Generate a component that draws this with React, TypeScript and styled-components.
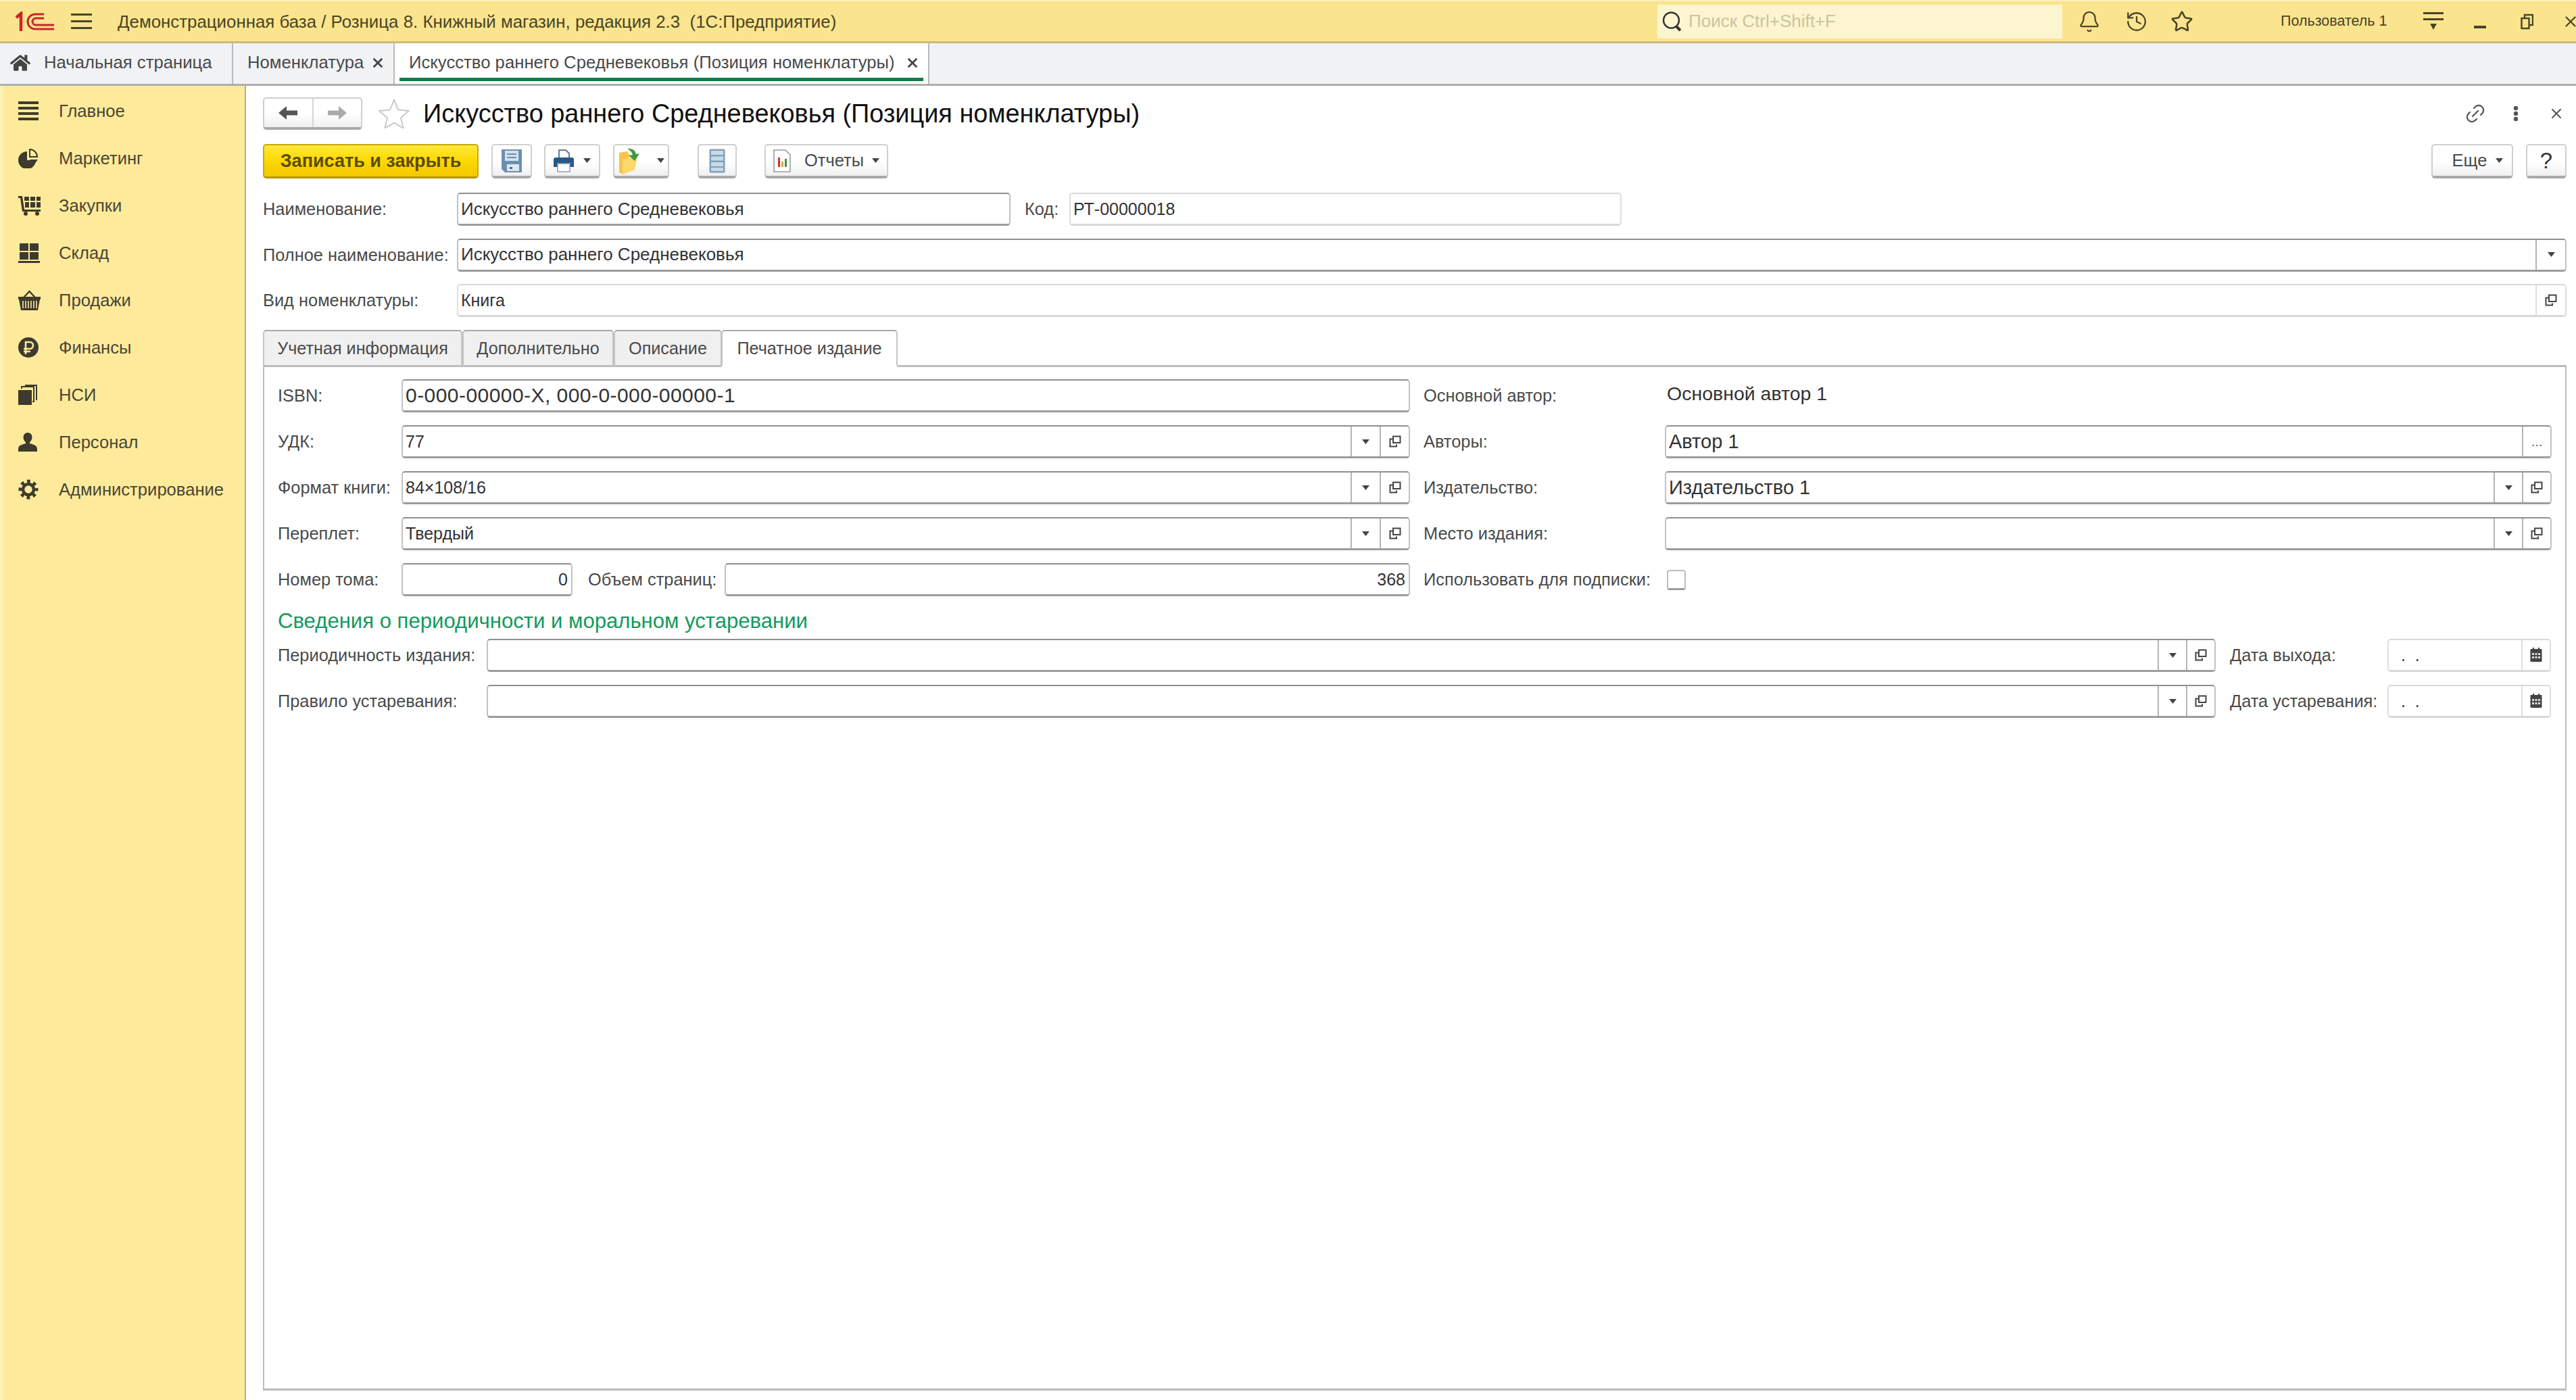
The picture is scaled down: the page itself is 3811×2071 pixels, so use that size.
import React from 'react';
import styled, { createGlobalStyle } from 'styled-components';
import { Bell, History, Star, Link2, X } from 'lucide-react';
import { FaHome } from 'react-icons/fa';

const GlobalStyle = createGlobalStyle`
  html, body {
    margin: 0;
    padding: 0;
    background: #fff;
  }
  body {
    font-family: "Liberation Sans", Arial, sans-serif;
    color: #333;
  }
`;

/* small drawings */

const Caret = () => (
  <svg width="11" height="7" viewBox="0 0 11 7"><path d="M0 0h11L5.5 7z" fill="#444" /></svg>
);

const OpenIcon = () => (
  <svg width="18" height="18" viewBox="0 0 18 18" fill="none" stroke="#444" strokeWidth="2">
    <rect x="6" y="1.5" width="10.5" height="9.5" />
    <path d="M6 5.5H1.5v11H11v-3" />
  </svg>
);

const CalendarIcon = () => (
  <svg width="18" height="22" viewBox="0 0 18 22">
    <path d="M4 0h2v3H4zM12 0h2v3h-2z" fill="#444" />
    <rect x="0.5" y="2" width="17" height="19" rx="1" fill="#444" />
    <path d="M3 8h3v3H3zM7.5 8h3v3h-3zM12 8h3v3h-3zM3 13h3v3H3zM7.5 13h3v3h-3zM12 13h3v3h-3z" fill="#ddd" />
  </svg>
);

const Logo1C = () => (
  <svg width="58" height="30" viewBox="0 0 58 30" fill="none" stroke="#c9252b">
    <path d="M2 9l7-6v26" strokeWidth="4.5" />
    <path d="M43 4H30a11 11 0 0 0 0 22h28" strokeWidth="3" />
    <path d="M43 10H31a5 5 0 0 0 0 10h27" strokeWidth="3" />
  </svg>
);

const BarsThin = () => (
  <svg width="31" height="23" viewBox="0 0 31 23" fill="#4a4426">
    <rect y="0" width="31" height="3" />
    <rect y="10" width="31" height="3" />
    <rect y="20" width="31" height="3" />
  </svg>
);

const SearchIcon = () => (
  <svg width="32" height="32" viewBox="0 0 32 32" fill="none" stroke="#333">
    <circle cx="14.5" cy="14" r="11.5" strokeWidth="2.4" />
    <path d="M22 23l6 6" strokeWidth="4" />
  </svg>
);

const MenuDownIcon = () => (
  <svg width="30" height="27" viewBox="0 0 30 27" fill="#4a4426">
    <rect y="0" width="30" height="3" />
    <rect y="9" width="30" height="3" />
    <path d="M10 17h10l-5 9z" />
  </svg>
);

const MinimizeIcon = () => (
  <svg width="18" height="24" viewBox="0 0 18 24"><rect y="18" width="18" height="4" fill="#4a4426" /></svg>
);

const RestoreIcon = () => (
  <svg width="19" height="24" viewBox="0 0 19 24" fill="none" stroke="#4a4426" strokeWidth="2.4">
    <rect x="6" y="2" width="12" height="15" />
    <rect x="1.5" y="7" width="11" height="15" fill="#fbe48e" />
  </svg>
);

const FavoriteStar = () => (
  <svg width="46" height="44" viewBox="0 0 46 44" fill="#fff" stroke="#c9c9c9" strokeWidth="2">
    <path d="M23 2l6.2 14.6 15.6 1.4-11.8 10.4 3.6 15.2L23 35.6 9.4 43.6 13 28.4 1.2 18l15.6-1.4z" />
  </svg>
);

const NavArrow = ({ back }: { back?: boolean }) => (
  <svg width="28" height="22" viewBox="0 0 28 22" fill="currentColor" style={{ transform: back ? undefined : 'scaleX(-1)' }}>
    <path d="M0 11L12 1v6.500h16v7H12V21z" />
  </svg>
);

const MoreDots = () => (
  <svg width="8" height="24" viewBox="0 0 8 24" fill="#555">
    <circle cx="4" cy="4" r="3.2" />
    <circle cx="4" cy="12" r="3.2" />
    <circle cx="4" cy="20" r="3.2" />
  </svg>
);

const FloppyIcon = () => (
  <svg width="30" height="34" viewBox="0 0 30 34">
    <path d="M0 0h30v34H5l-5-5z" fill="#6b8fb0" />
    <path d="M5 2h20v15H5z" fill="#d5e2ee" />
    <path d="M8 6h14v2H8zM8 11h14v2H8z" fill="#6b8fb0" />
    <path d="M8 22h18v10H8z" fill="#dfe7ee" />
    <path d="M12 26h4v3h-4z" fill="#456a8c" />
  </svg>
);

const PrinterIcon = () => (
  <svg width="30" height="34" viewBox="0 0 30 34">
    <path d="M8 1h10l5 5v9H8z" fill="#fff" stroke="#5d7f9f" strokeWidth="2" />
    <path d="M3 12h24a3 3 0 0 1 3 3v11h-6v-5H6v5H0V15a3 3 0 0 1 3-3z" fill="#28588a" />
    <path d="M6 21h18v12H6z" fill="#fff" stroke="#8d9fb0" strokeWidth="1.5" />
  </svg>
);

const FolderIcon = () => (
  <svg width="34" height="40" viewBox="0 0 34 40">
    <path d="M1 8l12-2 3 5v24l-9 5-6-3z" fill="#f6c548" />
    <path d="M6 18l22-4-4 19-18 7z" fill="#fbd96a" />
    <path d="M13 2c8-1 12 3 13 8l5-1-7 11-9-8 6-1c-1-4-4-7-8-9z" fill="#3c9b3a" />
  </svg>
);

const ListIcon = () => (
  <svg width="24" height="36" viewBox="0 0 24 36">
    <rect x="0.5" y="0.5" width="23" height="35" rx="2" fill="#7fa1bd" />
    <path d="M3 3h18v6H3zM3 11.500h18v6H3zM3 20h18v6H3zM3 28h18v5H3z" fill="#c9d9e6" />
  </svg>
);

const ReportIcon = () => (
  <svg width="26" height="34" viewBox="0 0 26 34">
    <path d="M1 1h17l7 7v25H1z" fill="#fff" stroke="#9a9a9a" strokeWidth="1.6" />
    <path d="M7 12h3v14H7z" fill="#c9352b" />
    <path d="M12 18h3v8h-3z" fill="#e0a82e" />
    <path d="M17 14h3v12h-3z" fill="#3c8f3f" />
  </svg>
);

const SideBars = () => (
  <svg width="30" height="30" viewBox="0 0 30 30" fill="#3e3a2e">
    <rect y="1" width="30" height="4" />
    <rect y="9" width="30" height="4" />
    <rect y="17" width="30" height="4" />
    <rect y="25" width="30" height="4" />
  </svg>
);

const SidePie = () => (
  <svg width="30" height="30" viewBox="0 0 30 30" fill="#3e3a2e">
    <path d="M13 5v13h13a13 13 0 1 1-13-13z" />
    <path d="M17 2a11 11 0 0 1 11 11H17z" fill="none" stroke="#3e3a2e" strokeWidth="2" />
    <path d="M17 17h12l-6 8z" />
  </svg>
);

const SideCart = () => (
  <svg width="33" height="30" viewBox="0 0 33 30" fill="#3e3a2e">
    <path d="M0 1h6l3 20h24v3H6L3 4H0z" />
    <path d="M9 2h7v6H9zM18 2h7v6h-7zM27 2h6v6h-6zM10 10h6v8h-6zM18 10h7v8h-7zM27 10h6v8h-6z" />
    <circle cx="11" cy="27" r="3" />
    <circle cx="28" cy="27" r="3" />
  </svg>
);

const SideStore = () => (
  <svg width="32" height="30" viewBox="0 0 32 30" fill="#3e3a2e">
    <path d="M2 1h13v11H2zM17 1h13v11H17zM2 14h13v11H2zM17 14h13v11H17z" />
    <rect y="27" width="32" height="3" />
  </svg>
);

const SideBasket = () => (
  <svg width="33" height="30" viewBox="0 0 33 30">
    <path d="M8 11L16.500 2 25 11" fill="none" stroke="#3e3a2e" strokeWidth="2.4" />
    <path d="M0 10h33v4h-1l-3 16H4L1 14H0z" fill="#3e3a2e" />
    <path d="M7 16v11M11 16v11M15 16v11M19 16v11M23 16v11M27 16v11" stroke="#fdeb9b" strokeWidth="1.6" />
  </svg>
);

const SideRuble = () => (
  <svg width="30" height="30" viewBox="0 0 30 30">
    <circle cx="15" cy="15" r="15" fill="#3e3a2e" />
    <path d="M11 25V7h6a5 5 0 0 1 0 10H8M8 21h10" fill="none" stroke="#fdeb9b" strokeWidth="2.6" />
  </svg>
);

const SideStack = () => (
  <svg width="28" height="30" viewBox="0 0 28 30" fill="none" stroke="#3e3a2e" strokeWidth="2">
    <rect x="0" y="8" width="20" height="22" fill="#3e3a2e" stroke="none" />
    <path d="M5 6V3h18v22h-2" />
    <path d="M10 1h17v22" />
  </svg>
);

const SidePerson = () => (
  <svg width="28" height="30" viewBox="0 0 28 30" fill="#3e3a2e">
    <path d="M14 1a6.500 6.500 0 0 1 6.500 7c0 3-2 6-3.500 7v2c3 1 11 2 11 8v4H0v-4c0-6 8-7 11-8v-2c-1.500-1-3.500-4-3.500-7A6.500 6.500 0 0 1 14 1z" />
  </svg>
);

const SideGear = () => (
  <svg width="30" height="30" viewBox="0 0 30 30" fill="none" stroke="#3e3a2e">
    <circle cx="15" cy="15" r="8" strokeWidth="4.500" />
    <circle cx="15" cy="15" r="12" strokeWidth="5" strokeDasharray="4.710 4.710" strokeDashoffset="2.350" />
  </svg>
);

/* shell */

const Page = styled.div`
  width: 100vw;
  height: 100vh;
  display: flex;
  flex-direction: column;
  overflow: hidden;
`;

const TopBar = styled.header`
  flex: none;
  height: 64px;
  box-sizing: border-box;
  display: flex;
  align-items: center;
  background: #fbe48e;
  border-top: 2px solid #fdf0b8;
  border-bottom: 3px solid #cdb97c;
`;

const LogoSlot = styled.div`
  flex: none;
  margin-left: 22px;
  display: flex;
`;

const MenuSlot = styled.div`
  flex: none;
  margin-left: 25px;
  display: flex;
`;

const AppTitle = styled.div`
  flex: none;
  margin-left: 38px;
  padding-top: 2px;
  width: 2278px;
  font-size: 25.85px;
  color: #4a4426;
  white-space: pre;
`;

const SearchBox = styled.div`
  flex: none;
  width: 599px;
  height: 50px;
  box-sizing: border-box;
  display: flex;
  align-items: center;
  gap: 8px;
  padding-left: 6px;
  background: #fdf5cf;
`;

const SearchHint = styled.span`
  font-size: 26px;
  color: #c9c4a4;
`;

const TopSlot = styled.div<{ $w: number; $ml?: number }>`
  flex: none;
  width: ${p => p.$w}px;
  margin-left: ${p => p.$ml || 0}px;
  display: flex;
  justify-content: center;
  color: #4a4426;
`;

const UserName = styled.div`
  flex: none;
  margin-left: 113px;
  width: 160px;
  font-size: 21.5px;
  color: #4a4426;
  white-space: nowrap;
`;

const TabBar = styled.nav`
  flex: none;
  height: 63px;
  box-sizing: border-box;
  display: flex;
  background: #f1f2f4;
  border-bottom: 3px solid #aeaeae;
`;

const PageTab = styled.div<{ $w: number; $active?: boolean }>`
  width: ${p => p.$w}px;
  box-sizing: border-box;
  position: relative;
  display: flex;
  align-items: center;
  padding: 0 12px 3px 21px;
  font-size: 25.7px;
  color: #4a4a4a;
  white-space: nowrap;
  background: ${p => (p.$active ? '#fff' : 'transparent')};
  border-right: 2px solid #b9b9b9;
  ${p => p.$active && `
    &::after {
      content: "";
      position: absolute;
      left: 7px;
      right: 7px;
      bottom: 4px;
      height: 5px;
      background: #0e7d4a;
    }
  `}
`;

const HomeGlyph = styled.span`
  display: flex;
  margin: 0 20px 0 -6px;
  font-size: 30px;
  color: #444;
`;

const TabClose = styled.span`
  display: flex;
  margin-left: auto;
  color: #444;
`;

const Body = styled.div`
  flex: 1;
  min-height: 0;
  display: flex;
`;

const Sidebar = styled.aside`
  flex: none;
  width: 364px;
  box-sizing: border-box;
  padding-top: 2px;
  background: #fdeb9b;
  border-left: 4px solid #fdf2b4;
  border-right: 2px solid #b8ae84;
`;

const SideItem = styled.div`
  height: 70px;
  display: flex;
  align-items: center;
  padding-left: 23px;
  font-size: 25.6px;
  color: #4b4535;
`;

const SideIcon = styled.span`
  width: 60px;
  flex: none;
  display: flex;
  font-size: 30px;
  color: #3e3a2e;
`;

const Main = styled.main`
  flex: 1;
  min-width: 0;
  display: flex;
  flex-direction: column;
  box-sizing: border-box;
  padding: 17px 14px 14px 25px;
`;

/* form header */

const HeaderRow = styled.div`
  flex: none;
  height: 48px;
  display: flex;
  align-items: center;
`;

const NavGroup = styled.div`
  width: 147px;
  height: 48px;
  box-sizing: border-box;
  display: flex;
  border: 2px solid #cfcfcf;
  border-bottom: 4px solid #a9a9a9;
  border-radius: 5px;
  background: linear-gradient(#fff 50%, #f0f0f0);
`;

const NavPart = styled.div<{ $dim?: boolean }>`
  flex: 1;
  display: flex;
  align-items: center;
  justify-content: center;
  color: ${p => (p.$dim ? '#a9a9a9' : '#555')};
  & + & {
    border-left: 2px solid #d5d5d5;
  }
`;

const StarSlot = styled.div`
  margin-left: 24px;
  display: flex;
`;

const FormTitle = styled.h1`
  margin: 0 0 0 20px;
  font-size: 37.9px;
  font-weight: 400;
  color: #111;
  white-space: nowrap;
`;

const HeaderActions = styled.div`
  margin-left: auto;
  margin-right: -15px;
  display: flex;
  align-items: center;
  color: #555;
`;

const ActionSlot = styled.div<{ $w: number }>`
  width: ${p => p.$w}px;
  display: flex;
  justify-content: center;
`;

const Toolbar = styled.div`
  flex: none;
  height: 51px;
  margin-top: 21px;
  display: flex;
`;

const ToolButton = styled.div<{ $w: number; $ml?: number; $gap?: number; $auto?: boolean; $fs?: number }>`
  width: ${p => p.$w}px;
  margin-left: ${p => (p.$auto ? 'auto' : `${p.$ml || 0}px`)};
  box-sizing: border-box;
  display: flex;
  align-items: center;
  justify-content: center;
  gap: ${p => p.$gap || 0}px;
  font-size: ${p => p.$fs || 25.5}px;
  color: #4a4a4a;
  border: 2px solid #cfcfcf;
  border-bottom: 4px solid #a9a9a9;
  border-radius: 5px;
  background: linear-gradient(#fff 55%, #efefef);
`;

const ToolLabel = styled.span<{ $ml?: number }>`
  margin-left: ${p => p.$ml || 0}px;
`;

const HelpMark = styled.span`
  font-size: 33px;
  color: #333;
`;

const SaveButton = styled.div`
  width: 319px;
  box-sizing: border-box;
  display: flex;
  align-items: center;
  justify-content: center;
  font-size: 27px;
  font-weight: 700;
  color: #5c4c00;
  border: 2px solid #c9a80c;
  border-bottom: 3px solid #b7960a;
  border-radius: 5px;
  background: linear-gradient(#ffe93a, #fcd800 50%, #f4c800);
`;

/* fields */

const FormRows = styled.div`
  flex: none;
  margin-top: 21px;
  display: flex;
  flex-direction: column;
  gap: 18.5px;
`;

const Row = styled.div`
  height: 49px;
  display: flex;
  align-items: center;
`;

const Label = styled.label<{ $w?: number; $ml?: number }>`
  flex: none;
  width: ${p => (p.$w ? `${p.$w}px` : 'auto')};
  margin-left: ${p => p.$ml || 0}px;
  font-size: 25.4px;
  color: #4a4a4a;
  white-space: nowrap;
`;

const FieldBox = styled.div<{ $w?: number; $light?: boolean }>`
  ${p => (p.$w ? `width: ${p.$w}px; flex: none;` : 'flex: 1; min-width: 0;')}
  height: 49px;
  box-sizing: border-box;
  display: flex;
  background: #fff;
  border-radius: 5px;
  border: 2px solid ${p => (p.$light ? '#dedede' : '#c2c2c2')};
  border-top-color: ${p => (p.$light ? '#d8d8d8' : '#8f8f8f')};
  border-bottom: 3px solid ${p => (p.$light ? '#d8d8d8' : '#9c9c9c')};
`;

const FieldText = styled.div<{ $right?: boolean; $size?: number; $track?: number }>`
  flex: 1;
  min-width: 0;
  display: flex;
  align-items: center;
  justify-content: ${p => (p.$right ? 'flex-end' : 'flex-start')};
  padding: 0 5px 0 4px;
  font-size: ${p => p.$size || 25}px;
  letter-spacing: ${p => p.$track || 0}px;
  color: #333;
  white-space: pre;
`;

const FieldButton = styled.div<{ $w?: number; $light?: boolean }>`
  flex: none;
  width: ${p => p.$w || 42}px;
  box-sizing: border-box;
  display: flex;
  align-items: center;
  justify-content: center;
  font-size: 20px;
  color: #666;
  border-left: 2px solid ${p => (p.$light ? '#dedede' : '#b5b5b5')};
`;

type FieldProps = {
  w?: number;
  light?: boolean;
  value?: string;
  right?: boolean;
  size?: number;
  track?: number;
  buttons?: React.ReactNode[];
  btnW?: number;
};

const Field = ({ w, light, value, right, size, track, buttons, btnW }: FieldProps) => (
  <FieldBox $w={w} $light={light}>
    <FieldText $right={right} $size={size} $track={track}>{value}</FieldText>
    {buttons?.map((b, i) => (
      <FieldButton key={i} $w={btnW} $light={light}>{b}</FieldButton>
    ))}
  </FieldBox>
);

const choice = [<Caret />, <OpenIcon />];

/* tabs and panel */

const FormTabs = styled.div`
  flex: none;
  margin-top: 19px;
  height: 55px;
  display: flex;
`;

const FormTab = styled.div<{ $w: number; $active?: boolean }>`
  width: ${p => p.$w}px;
  box-sizing: border-box;
  position: relative;
  z-index: ${p => (p.$active ? 1 : 0)};
  display: flex;
  align-items: center;
  justify-content: center;
  font-size: 25.2px;
  color: #4a4a4a;
  white-space: nowrap;
  background: ${p => (p.$active ? '#fff' : '#f0f0f0')};
  border: 2px solid #c4c4c4;
  border-top-color: #a9a9a9;
  border-bottom: ${p => (p.$active ? '3px solid #fff' : '3px solid #bcbcbc')};
  border-radius: 5px 5px 0 0;
  margin-left: ${p => (p.$active ? '-1px' : 0)};
`;

const Panel = styled.section`
  flex: 1;
  min-height: 0;
  margin-top: -3px;
  box-sizing: border-box;
  padding: 18px 20px 0 20px;
  border: 2px solid #bcbcbc;
  border-top-width: 3px;
  border-bottom-width: 3px;
`;

const Columns = styled.div`
  display: grid;
  grid-template-columns: 1675px 1fr;
  column-gap: 20px;
`;

const Column = styled.div`
  display: flex;
  flex-direction: column;
  gap: 19px;
`;

const StaticValue = styled.div`
  font-size: 28.5px;
  color: #333;
  margin: 0 0 6px 3px;
`;

const CheckBox = styled.div`
  width: 28px;
  height: 30px;
  margin-left: 3px;
  box-sizing: border-box;
  background: #fff;
  border: 2px solid #bdbdbd;
  border-bottom: 3px solid #9c9c9c;
  border-radius: 4px;
`;

const Heading = styled.h2`
  margin: 0;
  height: 63px;
  box-sizing: border-box;
  padding-top: 11px;
  display: flex;
  align-items: center;
  font-size: 31.1px;
  font-weight: 400;
  color: #14995c;
`;

const sideItems: [React.ReactNode, string][] = [
  [<SideBars />, 'Главное'],
  [<SidePie />, 'Маркетинг'],
  [<SideCart />, 'Закупки'],
  [<SideStore />, 'Склад'],
  [<SideBasket />, 'Продажи'],
  [<SideRuble />, 'Финансы'],
  [<SideStack />, 'НСИ'],
  [<SidePerson />, 'Персонал'],
  [<SideGear />, 'Администрирование'],
];

const App: React.FC = () => {
  return (
    <Page>
      <GlobalStyle />
      <TopBar>
        <LogoSlot><Logo1C /></LogoSlot>
        <MenuSlot><BarsThin /></MenuSlot>
        <AppTitle>{'Демонстрационная база / Розница 8. Книжный магазин, редакция 2.3  (1С:Предприятие)'}</AppTitle>
        <SearchBox>
          <SearchIcon />
          <SearchHint>Поиск Ctrl+Shift+F</SearchHint>
        </SearchBox>
        <TopSlot $w={70} $ml={5}><Bell size={34} strokeWidth={1.6} /></TopSlot>
        <TopSlot $w={69}><History size={34} strokeWidth={1.6} /></TopSlot>
        <TopSlot $w={66}><Star size={34} strokeWidth={1.8} /></TopSlot>
        <UserName>Пользователь 1</UserName>
        <TopSlot $w={70} $ml={31}><MenuDownIcon /></TopSlot>
        <TopSlot $w={68}><MinimizeIcon /></TopSlot>
        <TopSlot $w={70}><RestoreIcon /></TopSlot>
        <TopSlot $w={60}><X size={26} strokeWidth={2} /></TopSlot>
      </TopBar>

      <TabBar>
        <PageTab $w={345}>
          <HomeGlyph><FaHome /></HomeGlyph>
          Начальная страница
        </PageTab>
        <PageTab $w={239}>
          Номенклатура
          <TabClose><X size={22} strokeWidth={3} /></TabClose>
        </PageTab>
        <PageTab $w={791} $active>
          Искусство раннего Средневековья (Позиция номенклатуры)
          <TabClose><X size={22} strokeWidth={3} /></TabClose>
        </PageTab>
      </TabBar>

      <Body>
        <Sidebar>
          {sideItems.map(([icon, text]) => (
            <SideItem key={text}>
              <SideIcon>{icon}</SideIcon>
              {text}
            </SideItem>
          ))}
        </Sidebar>

        <Main>
          <HeaderRow>
            <NavGroup>
              <NavPart><NavArrow back /></NavPart>
              <NavPart $dim><NavArrow /></NavPart>
            </NavGroup>
            <StarSlot><FavoriteStar /></StarSlot>
            <FormTitle>Искусство раннего Средневековья (Позиция номенклатуры)</FormTitle>
            <HeaderActions>
              <ActionSlot $w={60}><Link2 size={34} strokeWidth={1.6} style={{ transform: 'rotate(-45deg)' }} /></ActionSlot>
              <ActionSlot $w={60}><MoreDots /></ActionSlot>
              <ActionSlot $w={60}><X size={24} strokeWidth={2} /></ActionSlot>
            </HeaderActions>
          </HeaderRow>

          <Toolbar>
            <SaveButton>Записать и закрыть</SaveButton>
            <ToolButton $w={60} $ml={19}><FloppyIcon /></ToolButton>
            <ToolButton $w={83} $ml={18} $gap={14}><PrinterIcon /><Caret /></ToolButton>
            <ToolButton $w={83} $ml={19} $gap={23}><FolderIcon /><Caret /></ToolButton>
            <ToolButton $w={58} $ml={42}><ListIcon /></ToolButton>
            <ToolButton $w={183} $ml={41} $gap={12}><ReportIcon /><ToolLabel $ml={8}>Отчеты</ToolLabel><Caret /></ToolButton>
            <ToolButton $w={121} $auto $gap={13}><ToolLabel $ml={16}>Еще</ToolLabel><Caret /></ToolButton>
            <ToolButton $w={60} $ml={19}><HelpMark>?</HelpMark></ToolButton>
          </Toolbar>

          <FormRows>
            <Row>
              <Label $w={287}>Наименование:</Label>
              <Field w={819} size={26} value="Искусство раннего Средневековья" />
              <Label $w={66} $ml={21}>Код:</Label>
              <Field w={817} light value="РТ-00000018" />
            </Row>
            <Row>
              <Label $w={287}>Полное наименование:</Label>
              <Field size={26} value="Искусство раннего Средневековья" btnW={44} buttons={[<Caret />]} />
            </Row>
            <Row>
              <Label $w={287}>Вид номенклатуры:</Label>
              <Field light value="Книга" btnW={44} buttons={[<OpenIcon />]} />
            </Row>
          </FormRows>

          <FormTabs>
            <FormTab $w={295}>Учетная информация</FormTab>
            <FormTab $w={224}>Дополнительно</FormTab>
            <FormTab $w={160}>Описание</FormTab>
            <FormTab $w={261} $active>Печатное издание</FormTab>
          </FormTabs>

          <Panel>
            <Columns>
              <Column>
                <Row>
                  <Label $w={183}>ISBN:</Label>
                  <Field size={30} track={0.45} value="0-000-00000-X, 000-0-000-00000-1" />
                </Row>
                <Row>
                  <Label $w={183}>УДК:</Label>
                  <Field value="77" btnW={43} buttons={choice} />
                </Row>
                <Row>
                  <Label $w={183}>Формат книги:</Label>
                  <Field value="84×108/16" btnW={43} buttons={choice} />
                </Row>
                <Row>
                  <Label $w={183}>Переплет:</Label>
                  <Field value="Твердый" btnW={43} buttons={choice} />
                </Row>
                <Row>
                  <Label $w={183}>Номер тома:</Label>
                  <Field w={253} right value="0" />
                  <Label $w={202} $ml={23}>Объем страниц:</Label>
                  <Field right value="368" />
                </Row>
              </Column>
              <Column>
                <Row>
                  <Label $w={357}>Основной автор:</Label>
                  <StaticValue>Основной автор 1</StaticValue>
                </Row>
                <Row>
                  <Label $w={357}>Авторы:</Label>
                  <Field size={29} value="Автор 1" buttons={['...']} />
                </Row>
                <Row>
                  <Label $w={357}>Издательство:</Label>
                  <Field size={29} value="Издательство 1" buttons={choice} />
                </Row>
                <Row>
                  <Label $w={357}>Место издания:</Label>
                  <Field buttons={choice} />
                </Row>
                <Row>
                  <Label $w={357}>Использовать для подписки:</Label>
                  <CheckBox />
                </Row>
              </Column>
            </Columns>

            <Heading>Сведения о периодичности и моральном устаревании</Heading>

            <Column>
              <Row>
                <Label $w={309}>Периодичность издания:</Label>
                <Field w={2558} buttons={choice} />
                <Label $w={233} $ml={21}>Дата выхода:</Label>
                <Field w={242} light value="  .  ." buttons={[<CalendarIcon />]} />
              </Row>
              <Row>
                <Label $w={309}>Правило устаревания:</Label>
                <Field w={2558} buttons={choice} />
                <Label $w={233} $ml={21}>Дата устаревания:</Label>
                <Field w={242} light value="  .  ." buttons={[<CalendarIcon />]} />
              </Row>
            </Column>
          </Panel>
        </Main>
      </Body>
    </Page>
  );
};

export default App;
